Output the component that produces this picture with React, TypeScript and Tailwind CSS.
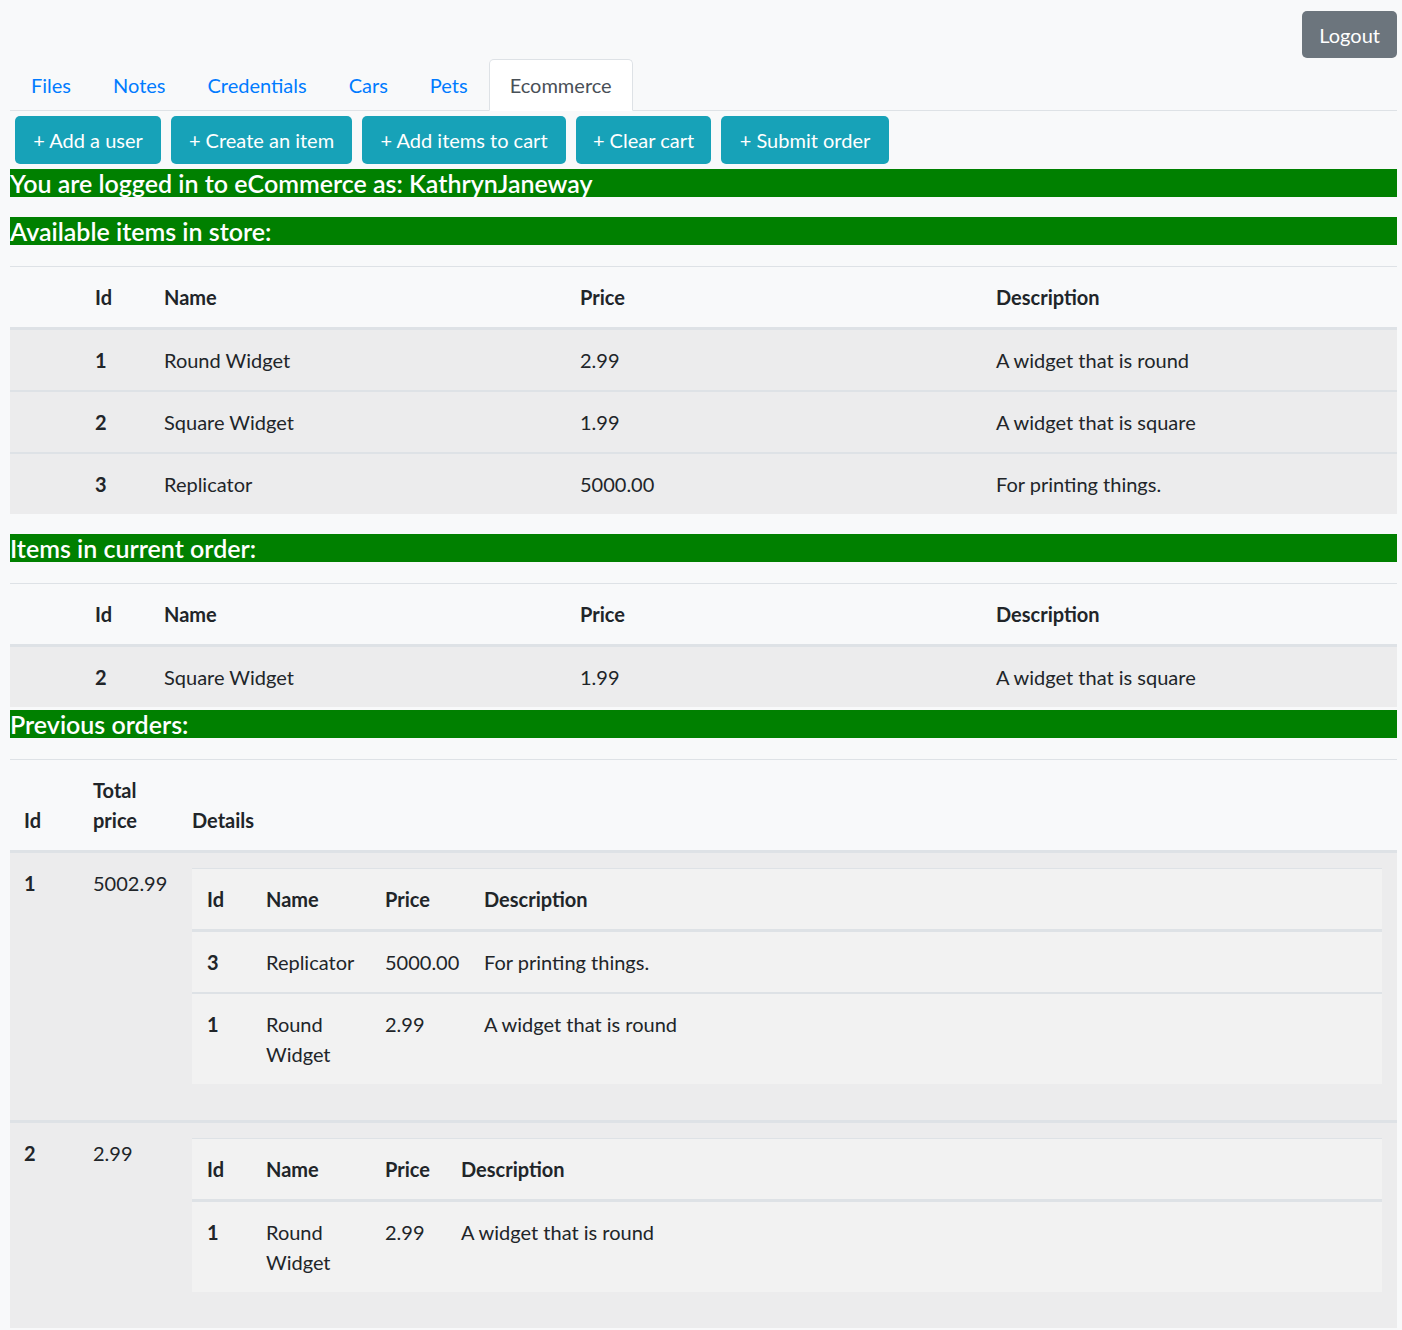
import React from 'react';

type Item = { id: number; name: string; price: string; description: string };

const storeItems: Item[] = [
  { id: 1, name: 'Round Widget', price: '2.99', description: 'A widget that is round' },
  { id: 2, name: 'Square Widget', price: '1.99', description: 'A widget that is square' },
  { id: 3, name: 'Replicator', price: '5000.00', description: 'For printing things.' },
];

const cartItems: Item[] = [storeItems[1]];

const orders = [
  { id: 1, total: '5002.99', items: [storeItems[2], storeItems[0]], priceCol: 'w-[99px]' },
  { id: 2, total: '2.99', items: [storeItems[0]], priceCol: 'w-[76px]' },
];

const tabs = ['Files', 'Notes', 'Credentials', 'Cars', 'Pets', 'Ecommerce'];
const actions = [
  { label: '+ Add a user', w: 'w-[146px]' },
  { label: '+ Create an item', w: 'w-[181px]' },
  { label: '+ Add items to cart', w: 'w-[204px]' },
  { label: '+ Clear cart', w: 'w-[135px]' },
  { label: '+ Submit order', w: 'w-[168px]' },
];

function Banner({ text, className = '' }: { text: string; className?: string }) {
  return (
    <div className={`h-[28px] bg-[#008000] text-white text-[25px] leading-[28px] font-semibold whitespace-nowrap overflow-hidden ${className}`}>
      {text}
    </div>
  );
}

function ItemTable({ items, className = '' }: { items: Item[]; className?: string }) {
  return (
    <table className={`w-full table-fixed border-collapse border-t border-[#dee2e6] ${className}`}>
      <colgroup>
        <col className="w-[70px]" />
        <col className="w-[69px]" />
        <col />
        <col />
        <col />
      </colgroup>
      <thead>
        <tr className="border-b-[3px] border-[#dee2e6] text-left">
          <th className="p-[15px]"></th>
          <th className="p-[15px] font-bold">Id</th>
          <th className="p-[15px] font-bold">Name</th>
          <th className="p-[15px] font-bold">Price</th>
          <th className="p-[15px] font-bold">Description</th>
        </tr>
      </thead>
      <tbody>
        {items.map((item, i) => (
          <tr key={item.id} className={`bg-[#ececed] ${i > 0 ? 'border-t-2 border-[#dee2e6]' : ''}`}>
            <td className="p-[15px]"></td>
            <td className="p-[15px] font-bold">{item.id}</td>
            <td className="p-[15px]">{item.name}</td>
            <td className="p-[15px]">{item.price}</td>
            <td className="p-[15px]">{item.description}</td>
          </tr>
        ))}
      </tbody>
    </table>
  );
}

function OrderDetails({ items, priceCol }: { items: Item[]; priceCol: string }) {
  return (
    <table className="w-full table-fixed border-collapse border-t border-[#dee2e6] bg-[#f2f2f2] mb-[21px]">
      <colgroup>
        <col className="w-[59px]" />
        <col className="w-[119px]" />
        <col className={priceCol} />
        <col />
      </colgroup>
      <thead>
        <tr className="border-b-[3px] border-[#dee2e6] text-left align-bottom">
          <th className="p-[15px] font-bold">Id</th>
          <th className="p-[15px] font-bold">Name</th>
          <th className="p-[15px] font-bold">Price</th>
          <th className="p-[15px] font-bold">Description</th>
        </tr>
      </thead>
      <tbody>
        {items.map((item, i) => (
          <tr key={item.id} className={`align-top ${i > 0 ? 'border-t-2 border-[#dee2e6]' : ''}`}>
            <td className="p-[15px] font-bold">{item.id}</td>
            <td className="p-[15px]">{item.name}</td>
            <td className="p-[15px]">{item.price}</td>
            <td className="p-[15px]">{item.description}</td>
          </tr>
        ))}
      </tbody>
    </table>
  );
}

export default function App() {
  return (
    <div className="min-h-screen bg-[#f8f9fa] pl-[10px] pr-[5px] text-[20px] leading-[30px] text-[#212529] font-['Segoe_UI',Lato,sans-serif]">
      <div className="flex justify-end pt-[11px]">
        <button className="h-[47px] px-[17px] rounded-[5px] bg-[#6c757d] text-white">Logout</button>
      </div>

      <ul className="flex border-b border-[#dee2e6] mt-[1px]">
        {tabs.map((tab) => {
          const active = tab === 'Ecommerce';
          return (
            <li key={tab} className="-mb-px">
              <a
                className={`block px-[20px] py-[10px] border rounded-t-[5px] ${
                  active ? 'bg-white border-[#dee2e6] border-b-white text-[#495057]' : 'border-transparent text-[#007bff]'
                }`}
              >
                {tab}
              </a>
            </li>
          );
        })}
      </ul>

      <div className="flex flex-wrap">
        {actions.map((a) => (
          <button key={a.label} className={`m-[5px] h-[48px] ${a.w} rounded-[5px] bg-[#17a2b8] text-white`}>
            {a.label}
          </button>
        ))}
      </div>

      <Banner text="You are logged in to eCommerce as: KathrynJaneway" className="mb-[20px]" />
      <Banner text="Available items in store:" className="mb-[21px]" />
      <ItemTable items={storeItems} className="mb-[20px]" />

      <Banner text="Items in current order:" className="mb-[21px]" />
      <ItemTable items={cartItems} />

      <Banner text="Previous orders:" className="mt-[3px] mb-[21px]" />
      <table className="w-full table-fixed border-collapse border-t border-[#dee2e6]">
        <colgroup>
          <col className="w-[68px]" />
          <col className="w-[99px]" />
          <col />
        </colgroup>
        <thead>
          <tr className="border-b-[3px] border-[#dee2e6] text-left align-bottom">
            <th className="p-[15px] pl-[14px] font-bold">Id</th>
            <th className="p-[15px] font-bold">
              Total
              <br />
              price
            </th>
            <th className="p-[15px] font-bold">Details</th>
          </tr>
        </thead>
        <tbody>
          {orders.map((order, i) => (
            <tr key={order.id} className={`bg-[#ececed] align-top ${i > 0 ? 'border-t-[3px] border-[#dee2e6]' : ''}`}>
              <td className="p-[15px] pl-[14px] font-bold">{order.id}</td>
              <td className="p-[15px]">{order.total}</td>
              <td className="p-[15px]">
                <OrderDetails items={order.items} priceCol={order.priceCol} />
              </td>
            </tr>
          ))}
        </tbody>
      </table>
    </div>
  );
}
